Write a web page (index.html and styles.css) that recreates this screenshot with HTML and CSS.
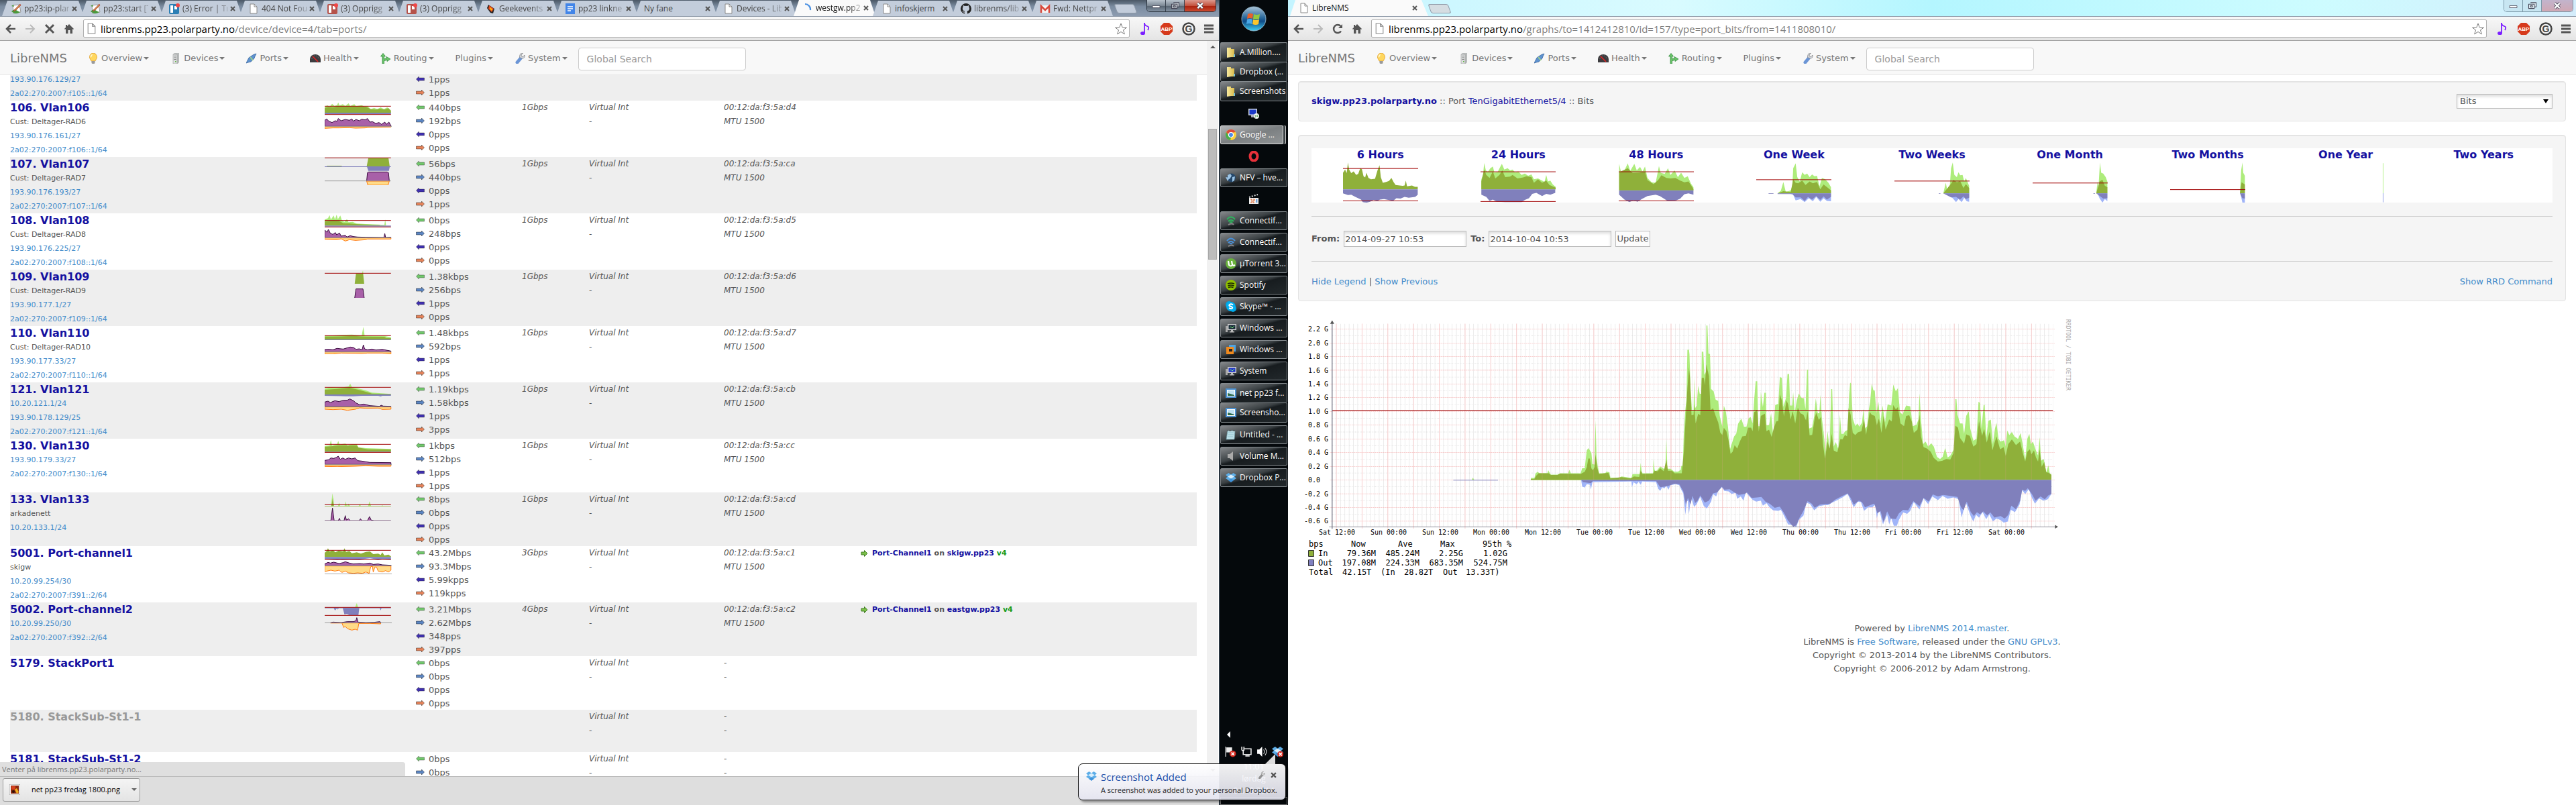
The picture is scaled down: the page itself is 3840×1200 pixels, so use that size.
FILE: index.html
```html
<!DOCTYPE html>
<html lang="no">
<head>
<meta charset="utf-8">
<title>LibreNMS</title>
<link rel="stylesheet" href="styles.css">
</head>
<body>
<svg class="defs" width="0" height="0" aria-hidden="true">
<defs>
<linearGradient id="orb" x1="0" y1="0" x2="0" y2="1"><stop offset="0" stop-color="#a9c4d8"/><stop offset=".45" stop-color="#2c6a9c"/><stop offset=".6" stop-color="#0f4a86"/><stop offset="1" stop-color="#3fd0f5"/></linearGradient>
<linearGradient id="fold" x1="0" y1="0" x2="1" y2="0"><stop offset="0" stop-color="#f7eaa0"/><stop offset="1" stop-color="#d9b94a"/></linearGradient>
</defs>
<symbol id="page" viewBox="0 0 16 16"><path d="M3 1h6l4 4v10H3z" fill="#fff" stroke="#888"/><path d="M9 1v4h4" fill="none" stroke="#888"/></symbol>
<symbol id="x" viewBox="0 0 8 8"><path d="M1 1l6 6M7 1L1 7" stroke="#555" stroke-width="2"/></symbol>
<symbol id="wiki" viewBox="0 0 16 16"><path d="M3 3l10-1 2 11-11 2z" fill="#fff" stroke="#999"/><path d="M1 4l3-2 1 3zM1 12q4-4 7-2t6 3q-6 4-10 1z" fill="#4a9a3c"/><path d="M14 1L6 9l-2 3 4-2 7-7z" fill="#d08a4a" stroke="#a33" stroke-width=".6"/></symbol>
<symbol id="trello" viewBox="0 0 16 16"><rect y="1" width="15" height="15" rx="2" fill="currentColor"/><rect x="2" y="3" width="4" height="11" fill="#fff"/><path d="M8 4h4v5H8z" fill="#fff"/><circle cx="13" cy="3" r="3" fill="#f04848"/></symbol>
<symbol id="geek" viewBox="0 0 16 16"><path d="M4 2l9 6-2 7-4-1-5-7z" fill="#222"/><path d="M5 3l7 5-3 5-5-5z" fill="#e8491d"/><path d="M7 6l3 3-1 2-3-3z" fill="#ffc107"/></symbol>
<symbol id="docs" viewBox="0 0 16 16"><path d="M1 0h14v16H1z" fill="#4285e8"/><path d="M4 5h8M4 8h8M4 11h5" stroke="#fff" stroke-width="1.4"/></symbol>
<symbol id="spin" viewBox="0 0 16 16"><path d="M4 2a8 8 0 0 1 8 9" fill="none" stroke="#4a90e2" stroke-width="2.2"/></symbol>
<symbol id="github" viewBox="0 0 16 16"><path d="M8 0a8 8 0 0 0-2.5 15.600c.4 0 .5-.2.5-.5v-1.500c-2.200.5-2.700-1-2.700-1-.4-.9-.9-1.200-.9-1.200-.7-.5.1-.5.1-.5.8.1 1.200.8 1.200.8.7 1.200 1.900.9 2.300.7.1-.5.3-.9.5-1.100C4.700 11.100 2.900 10.500 2.900 7.400c0-.9.3-1.600.8-2.100 0-.2-.3-1 .1-2.200 0 0 .7-.2 2.200.8a8 8 0 0 1 4 0c1.500-1 2.200-.8 2.200-.8.4 1.200.1 2 .1 2.200.5.5.8 1.200.8 2.100 0 3.100-1.900 3.700-3.700 3.900.3.300.6.800.6 1.500v2.300c0 .3.100.5.500.5A8 8 0 0 0 8 0z" fill="#222"/></symbol>
<symbol id="gmail" viewBox="0 0 16 16"><path d="M1 3h14v11H1z" fill="#f4f4f4"/><path d="M2 14V4l6 6 6-6v10" fill="none" stroke="#d9483b" stroke-width="2.500"/></symbol>
<symbol id="back" viewBox="0 0 16 16"><path d="M15 8H3M8 2L2 8l6 6" fill="none" stroke="currentColor" stroke-width="2.500"/></symbol>
<symbol id="fwd" viewBox="0 0 16 16"><path d="M1 8h12M8 2l6 6-6 6" fill="none" stroke="currentColor" stroke-width="2"/></symbol>
<symbol id="stop" viewBox="0 0 16 16"><path d="M2 2l12 12M14 2L2 14" stroke="#555" stroke-width="3"/></symbol>
<symbol id="reload" viewBox="0 0 16 16"><path d="M13 11.500A6 6 0 1 1 12.500 4" fill="none" stroke="#555" stroke-width="2.500"/><path d="M15 1v6H9z" fill="#555"/></symbol>
<symbol id="home" viewBox="0 0 16 16"><path d="M8 1l7 7-1 1-1-1v7H9.500v-5h-3v5H3V8L2 9 1 8l2-2V2h2v2z" fill="#555"/></symbol>
<symbol id="star" viewBox="0 0 18 18"><path d="M9 1l2.200 5.800 6.200.2-4.900 3.800 1.800 6L9 13.400l-5.300 3.400 1.800-6L.6 7l6.200-.2z" fill="#fff" stroke="#777"/></symbol>
<symbol id="note" viewBox="0 0 16 20"><path d="M8 1v15" stroke="#7b1fff" stroke-width="1.800"/><path d="M8 1q0 4 4 5t1 6" fill="none" stroke="#7b1fff" stroke-width="1.800"/><ellipse cx="5.500" cy="16.500" rx="3.500" ry="2.600" fill="#7b1fff"/></symbol>
<symbol id="abp" viewBox="0 0 20 20"><path d="M6 1h8l5 5v8l-5 5H6l-5-5V6z" fill="#d63a1c"/><text x="10" y="13" text-anchor="middle" font-family="Liberation Sans" font-weight="700" font-size="8" fill="#fff">ABP</text></symbol>
<symbol id="gh" viewBox="0 0 20 20"><circle cx="10" cy="10" r="8.500" fill="#f4f4f4" stroke="#444" stroke-width="2.500"/><text x="10" y="15" text-anchor="middle" font-family="Liberation Sans" font-weight="700" font-size="14" fill="#444">G</text></symbol>
<symbol id="menu" viewBox="0 0 14 14"><path d="M0 2h14M0 7h14M0 12h14" stroke="#555" stroke-width="3"/></symbol>
<symbol id="bulb" viewBox="0 0 16 16"><path d="M8 0a6 6 0 0 1 4 10l-1 2H5l-1-2A6 6 0 0 1 8 0z" fill="#ffd75e" stroke="#e0a030" stroke-width=".8"/><path d="M6 2q-3 2-2 5 2-1 3-5z" fill="#fff7d0"/><path d="M5.500 12h5v3l-1 1h-3l-1-1z" fill="#9a9a9a"/></symbol>
<symbol id="server" viewBox="0 0 16 16"><path d="M4 2l2-2h7v14l-2 2H4z" fill="#b9bcbc"/><path d="M4 2h6v14H4z" fill="#dcdede" stroke="#999" stroke-width=".6"/><path d="M5.500 4.500h3M5.500 7h3M5.500 9.500h3" stroke="#777"/><path d="M7 12h1.500v1.500H7z" fill="#5bb53a"/></symbol>
<symbol id="plug" viewBox="0 0 16 16"><path d="M15 1l-3 1-2 1-6 4-2 4-2 4 3-1 4-1 5-5 1-3z" fill="#5f93d0" stroke="#35639e" stroke-width=".8"/><path d="M6 6l4 5" stroke="#9fd08a" stroke-width="2"/></symbol>
<symbol id="gauge" viewBox="0 0 16 16"><path d="M0 14V9a8 7 0 0 1 16 0v5z" fill="#3c3c3f"/><path d="M3 9a5 5 0 0 1 10 0" stroke="#888" fill="none" stroke-dasharray="1 2"/><path d="M4 5l8 8" stroke="#e22" stroke-width="1.400"/></symbol>
<symbol id="route" viewBox="0 0 16 16"><path d="M3 16V5H.5L4 .5 7.500 5H5.500v4L9 8V5.500L15 9l-5 3.500V10L5.500 12v4z" fill="#6cc46a" stroke="#2f8a3a" stroke-width=".8"/></symbol>
<symbol id="wrench" viewBox="0 0 16 16"><path d="M9 8L4 14" stroke="#6b95d6" stroke-width="5" stroke-linecap="round"/><path d="M15 3l-2.500 2.500-2-.5-.5-2L12.500.5Q9-.5 8 3t0 4l3 1q5 0 4-5z" fill="#d4d8de" stroke="#777" stroke-width=".7"/></symbol>
<symbol id="left" viewBox="0 0 14 10"><path d="M1 5l4-4v2h8v4H5v2z" fill="currentColor" stroke="#0005"/></symbol>
<symbol id="right" viewBox="0 0 14 10"><path d="M13 5L9 1v2H1v4h8v2z" fill="currentColor" stroke="#0006"/></symbol>
<symbol id="go" viewBox="0 0 10 10"><path d="M9.500 5L5 .5V3H.5v4H5v2.500z" fill="#7cbf4a" stroke="#3f7d22"/></symbol>
<symbol id="folder" viewBox="0 0 16 16"><path d="M2 1h6v14l-6 1zM8 3h5v12H8z" fill="url(#fold)"/><path d="M12 11h2v4h-2z" fill="#6cc0dc"/></symbol>
<symbol id="dropbox" viewBox="0 0 16 16"><path d="M4.500 1L8 3.500 11.500 1 16 4l-3 2.500L16 9l-4.500 3L8 9.500 4.500 12 0 9l3-2.500L0 4z" fill="#5eaee8"/><path d="M8 3.500L13 6.500 8 9.500 3 6.500z" fill="#d8eefc"/><path d="M4 12l4-2.500 4 2.500-4 3z" fill="#3e92da"/></symbol>
<symbol id="monitor" viewBox="0 0 16 16"><path d="M0 5h3v9H0z" fill="#aaa"/><path d="M3 2h13v9H3z" fill="#ccc"/><path d="M4.500 3.500h10v6h-10z" fill="currentColor"/><path d="M8 11h3v2h2v1.500H6V13h2z" fill="#bbb"/><path d="M6 7l2-1 2 2 3-3" stroke="#8f8" fill="none"/></symbol>
<symbol id="rdp" viewBox="0 0 16 16"><path d="M0 1h13v10H0z" fill="#ccd4dd"/><path d="M1.500 2.500h10v7h-10z" fill="#1a38c8"/><path d="M4 11h5v3H4z" fill="#aab"/><circle cx="12" cy="12" r="4" fill="#f4f4f4"/><path d="M9.500 11l2 1.500-2 1.500M14.500 10l-2 1.500 2 1.500" stroke="#2a8a2a" fill="none"/></symbol>
<symbol id="chrome" viewBox="0 0 16 16"><circle cx="8" cy="8" r="8" fill="#fbd03a"/><path d="M1 4a8 8 0 0 1 14 0l-7 1-3 4z" fill="#dd4b39"/><path d="M1 4l4 6 3 2-1 4A8 8 0 0 1 1 4z" fill="#4aae48"/><circle cx="8" cy="8" r="3.500" fill="#4a8ae8" stroke="#fff" stroke-width="1.200"/></symbol>
<symbol id="opera" viewBox="0 0 16 16"><ellipse cx="8" cy="8" rx="5.500" ry="6.500" fill="none" stroke="#e8313a" stroke-width="4"/></symbol>
<symbol id="globe" viewBox="0 0 16 16"><circle cx="8.500" cy="8" r="6.500" fill="#24476b"/><path d="M3 4l4-2 2 3-3 5-3-2zM10 7l4-1-1 6-3 2zM0 7l6 1-3 5z" fill="#9cc4e4"/></symbol>
<symbol id="mpc" viewBox="0 0 16 16"><path d="M1 6h14v9H1z" fill="#eee"/><path d="M1 5l13-4" stroke="#ddd" stroke-width="2" stroke-dasharray="2 2"/><path d="M3 8h2v5H3M7 8h2v2H7v3h2" stroke="#e0622a" fill="none"/><path d="M12.500 8v5" stroke="#2a7ad0" stroke-width="1.500"/></symbol>
<symbol id="wifi" viewBox="0 0 16 16"><path d="M2 6q6-7 12 0M4 9q4-4 8 0M6 11q2-2 4 0" fill="none" stroke="currentColor" stroke-width="2"/><path d="M4 14q6-3 8 0" stroke="#888" fill="none" stroke-width="2"/></symbol>
<symbol id="ut" viewBox="0 0 16 16"><circle cx="8" cy="8" r="8" fill="#69b13c"/><path d="M4 4l1 6q3 3 5 0l-1-6M10 9q1 3 4 1" fill="none" stroke="#fff" stroke-width="2.200"/></symbol>
<symbol id="spotify" viewBox="0 0 16 16"><circle cx="8" cy="8" r="8" fill="#8fbf00"/><path d="M3 6q5-2 10 0M3.500 9q4.500-2 9 0M4 11.500q4-1.500 7.500 0" fill="none" stroke="#1a2400" stroke-width="1.500"/></symbol>
<symbol id="skype" viewBox="0 0 16 16"><circle cx="5" cy="5" r="5" fill="#00a6e4"/><circle cx="11" cy="11" r="5" fill="#00a6e4"/><circle cx="8" cy="8" r="7" fill="#00aff0"/><path d="M11 5.500Q8 3.500 6 5t1.500 2.800T10 10.500t-5-.2" fill="none" stroke="#fff" stroke-width="2"/></symbol>
<symbol id="vm" viewBox="0 0 16 16"><path d="M5 1h10v10H5z" fill="#4fa3e0"/><path d="M1 4h11v11H1z" fill="#f08a1d"/><path d="M5 7h5v4H5z" fill="#222"/></symbol>
<symbol id="pic" viewBox="0 0 16 16"><path d="M0 1h16v14H0z" fill="#4a90d0"/><path d="M2 3h12v10H2z" fill="#fff"/><path d="M3 4h10v8H3z" fill="#bfe0f2"/><path d="M3 12V8l4 1 6 2v1z" fill="#2f6a4a"/></symbol>
<symbol id="pad" viewBox="0 0 16 16"><path d="M3 2h11l-1 13H1z" fill="#bfe2ea" stroke="#6b9aa5" stroke-width=".7"/><path d="M4 5h8M4 8h8M3 11h8" stroke="#8fc0cc"/><path d="M3 2h11" stroke="#444" stroke-width="1.500" stroke-dasharray="1 1"/></symbol>
<symbol id="vol" viewBox="0 0 16 16"><path d="M3 5h3l5-4v14l-5-4H3z" fill="currentColor"/></symbol>
<symbol id="orbi" viewBox="0 0 38 38"><circle cx="19" cy="19" r="18" fill="url(#orb)" stroke="#8fb0c4"/><path d="M10 12q4-2 8 0l-1 7q-4-2-8 0z" fill="#e8602a"/><path d="M19 12q4 2 9 0l-1 7q-4 2-9 0z" fill="#94c83d"/><path d="M9 20q4-2 8 0l-1 7q-4-2-8 0z" fill="#4aa8e8"/><path d="M18 20q4 2 9 0l-1 7q-4 2-9 0z" fill="#fcc62c"/></symbol>
<symbol id="wmin" viewBox="0 0 14 10"><path d="M1 5l11 0v3H1z" fill="#fff" stroke="#445" stroke-width=".8"/></symbol>
<symbol id="wres" viewBox="0 0 14 12"><path d="M4 1h9v7h-2M1 3.500h9v7H1zM4 6h3v2H4z" fill="#fff8" stroke="#445" stroke-width="1.200"/></symbol>
<symbol id="wx" viewBox="0 0 14 12"><path d="M3 2l8 8M11 2l-8 8" stroke="#445" stroke-width="4.500"/><path d="M3 2l8 8M11 2l-8 8" stroke="#fff" stroke-width="2.600"/></symbol>
</svg>

<div class="desktop">
<section class="browser">
  <header class="tabs tabs-dark">
    <a class="tab" href="#"><svg><use href="#wiki"/></svg><span>pp23:ip-plan</span><svg class="x"><use href="#x"/></svg></a>
    <a class="tab" href="#"><svg><use href="#wiki"/></svg><span>pp23:start [T</span><svg class="x"><use href="#x"/></svg></a>
    <a class="tab" href="#"><svg class="tb"><use href="#trello"/></svg><span>(3) Error | Tr</span><svg class="x"><use href="#x"/></svg></a>
    <a class="tab" href="#"><svg><use href="#page"/></svg><span>404 Not Fou</span><svg class="x"><use href="#x"/></svg></a>
    <a class="tab" href="#"><svg class="tr"><use href="#trello"/></svg><span>(3) Opprigg</span><svg class="x"><use href="#x"/></svg></a>
    <a class="tab" href="#"><svg class="tr"><use href="#trello"/></svg><span>(3) Opprigg</span><svg class="x"><use href="#x"/></svg></a>
    <a class="tab" href="#"><svg><use href="#geek"/></svg><span>Geekevents</span><svg class="x"><use href="#x"/></svg></a>
    <a class="tab" href="#"><svg><use href="#docs"/></svg><span>pp23 linkne</span><svg class="x"><use href="#x"/></svg></a>
    <a class="tab plain" href="#"><span>Ny fane</span><svg class="x"><use href="#x"/></svg></a>
    <a class="tab" href="#"><svg><use href="#page"/></svg><span>Devices - Lib</span><svg class="x"><use href="#x"/></svg></a>
    <a class="tab active" href="#"><svg><use href="#spin"/></svg><span>westgw.pp2</span><svg class="x"><use href="#x"/></svg></a>
    <a class="tab plain" href="#"><svg><use href="#page"/></svg><span>infoskjerm</span><svg class="x"><use href="#x"/></svg></a>
    <a class="tab" href="#"><svg><use href="#github"/></svg><span>librenms/lib</span><svg class="x"><use href="#x"/></svg></a>
    <a class="tab" href="#"><svg><use href="#gmail"/></svg><span>Fwd: Nettpr</span><svg class="x"><use href="#x"/></svg></a>
    <button class="newtab" aria-label="New tab"></button>
    <div class="winctl dark"><button aria-label="Minimise"><svg><use href="#wmin"/></svg></button><button aria-label="Restore"><svg><use href="#wres"/></svg></button><button class="close" aria-label="Close"><svg><use href="#wx"/></svg></button></div>
  </header>
  <div class="toolbar">
    <svg class="ti"><use href="#back"/></svg><svg class="ti dim"><use href="#fwd"/></svg><svg class="ti"><use href="#stop"/></svg><svg class="ti"><use href="#home"/></svg>
    <div class="url"><svg><use href="#page"/></svg><span class="addr"><b>librenms.pp23.polarparty.no</b>/device/device=4/tab=ports/</span><svg class="star"><use href="#star"/></svg></div>
    <svg class="ext"><use href="#note"/></svg><svg class="ext"><use href="#abp"/></svg><svg class="ext"><use href="#gh"/></svg><svg class="mn"><use href="#menu"/></svg>
  </div>
  <div class="view">
    <main class="doc">
      <nav class="navbar">
        <a class="brand" href="#">LibreNMS</a>
        <a href="#"><svg><use href="#bulb"/></svg>Overview<i></i></a><a href="#"><svg><use href="#server"/></svg>Devices<i></i></a><a href="#"><svg><use href="#plug"/></svg>Ports<i></i></a><a href="#"><svg><use href="#gauge"/></svg>Health<i></i></a><a href="#"><svg><use href="#route"/></svg>Routing<i></i></a><a href="#">Plugins<i></i></a><a href="#"><svg><use href="#wrench"/></svg>System<i></i></a>
        <input type="search" placeholder="Global Search" aria-label="Global Search">
      </nav>
      <div class="scrolled">
      <table class="ports">
        <colgroup><col class="c-name"><col class="c-graph"><col class="c-rate"><col class="c-speed"><col class="c-type"><col class="c-mac"><col></colgroup>
        <tbody>
        <tr><td><a href="#">193.90.176.129/27</a><a href="#">2a02:270:2007:f105::1/64</a></td><td></td><td><p class="pi"><svg><use href="#left"/></svg>1pps</p><p class="po"><svg><use href="#right"/></svg>1pps</p></td><td></td><td></td><td></td><td></td></tr>

        <tr><td><a class="name" href="#">106. Vlan106</a><span>Cust: Deltager-RAD6</span><a href="#">193.90.176.161/27</a><a href="#">2a02:270:2007:f106::1/64</a></td>
        <td><svg class="spark" viewBox="0 0 163 126" preserveAspectRatio="none"><path class="gl" d="M0 54V30L6 20 12 28 18 14 24 24 30 20 33 8 36 22 44 16 50 24 58 12 62 24 72 16 76 25 90 20 98 28 104 24 112 38 120 32 128 38 136 30 144 38 152 30 156 36 161 54z"/><path class="g" d="M0 54V32L10 28 20 30 30 26 100 27 112 38 125 40 135 36 145 40 155 34 161 44V54z"/><path class="b" d="M0 54H161V61H0z"/><path class="r" d="M0 25H161M0 62H161"/><path class="p" d="M0 115V88L5 82 10 92 18 98 25 90 30 92 33 80 40 90 50 84 60 88 66 82 70 92 76 84 84 90 90 83 98 86 104 80 110 96 116 94 124 102 132 98 138 106 146 96 150 106 156 96 161 112V115z"/><path class="o" d="M0 116V124L20 122 35 122 60 121 75 123 98 122 105 120 161 118V116z"/><path class="a" d="M0 115H163"/></svg></td>
        <td><p class="bi"><svg><use href="#left"/></svg>440bps</p><p class="bo"><svg><use href="#right"/></svg>192bps</p><p class="pi"><svg><use href="#left"/></svg>0pps</p><p class="po"><svg><use href="#right"/></svg>0pps</p></td><td>1Gbps</td><td>Virtual Int<br>-</td><td>00:12:da:f3:5a:d4<br>MTU 1500</td><td></td></tr>

        <tr><td><a class="name" href="#">107. Vlan107</a><span>Cust: Deltager-RAD7</span><a href="#">193.90.176.193/27</a><a href="#">2a02:270:2007:f107::1/64</a></td>
        <td><svg class="spark" viewBox="0 0 163 126" preserveAspectRatio="none"><path class="g" d="M102 43L106 5H155L158 43zM4 43L6 40H40L44 43z"/><path class="b" d="M0 42H102 161V45H158L156 62H106L103 45H0z"/><path class="r" d="M0 4H161"/><path class="p" d="M102 107L104 70 107 67H152L155 70 157 107z"/><path class="o" d="M102 108L105 126H154L157 108z"/><path class="a" d="M0 107H161"/></svg></td>
        <td><p class="bi"><svg><use href="#left"/></svg>56bps</p><p class="bo"><svg><use href="#right"/></svg>440bps</p><p class="pi"><svg><use href="#left"/></svg>0pps</p><p class="po"><svg><use href="#right"/></svg>1pps</p></td><td>1Gbps</td><td>Virtual Int<br>-</td><td>00:12:da:f3:5a:ca<br>MTU 1500</td><td></td></tr>

        <tr><td><a class="name" href="#">108. Vlan108</a><span>Cust: Deltager-RAD8</span><a href="#">193.90.176.225/27</a><a href="#">2a02:270:2007:f108::1/64</a></td>
        <td><svg class="spark" viewBox="0 0 163 126" preserveAspectRatio="none"><path class="gl" d="M0 55V28L8 22 12 8 15 28 22 10 25 28 29 6 32 26 38 10 42 32 48 38 54 26 58 40 68 38 78 46 100 48 130 50 145 52 147 28 149 52V55z"/><path class="g" d="M0 55V36L10 34 22 32 35 34 45 44 60 45 75 48 100 50 134 52V55z"/><path class="b" d="M0 55H161V59H0z"/><path class="r" d="M0 32H161M0 61H161"/><path class="p" d="M0 109V75L6 84 9 72 14 90 20 94 26 86 29 96 36 88 40 102 50 98 54 106 62 100 70 104 80 106 100 107 144 108 146 90 148 108 161 107V109z"/><path class="o" d="M0 110V116L30 118 40 114 50 124 60 118 75 121 100 118 104 115 161 115V110z"/><path class="a" d="M0 109H161"/></svg></td>
        <td><p class="bi"><svg><use href="#left"/></svg>0bps</p><p class="bo"><svg><use href="#right"/></svg>248bps</p><p class="pi"><svg><use href="#left"/></svg>0pps</p><p class="po"><svg><use href="#right"/></svg>0pps</p></td><td>1Gbps</td><td>Virtual Int<br>-</td><td>00:12:da:f3:5a:d5<br>MTU 1500</td><td></td></tr>

        <tr><td><a class="name" href="#">109. Vlan109</a><span>Cust: Deltager-RAD9</span><a href="#">193.90.177.1/27</a><a href="#">2a02:270:2007:f109::1/64</a></td>
        <td><svg class="spark" viewBox="0 0 163 126" preserveAspectRatio="none"><path class="gl" d="M90 20L93 4 96 62z"/><path class="g" d="M73 63L76 18H93L96 63z"/><path class="r" d="M0 16H161"/><path class="p" d="M73 126L76 86H93L96 126"/></svg></td>
        <td><p class="bi"><svg><use href="#left"/></svg>1.38kbps</p><p class="bo"><svg><use href="#right"/></svg>256bps</p><p class="pi"><svg><use href="#left"/></svg>1pps</p><p class="po"><svg><use href="#right"/></svg>0pps</p></td><td>1Gbps</td><td>Virtual Int<br>-</td><td>00:12:da:f3:5a:d6<br>MTU 1500</td><td></td></tr>

        <tr><td><a class="name" href="#">110. Vlan110</a><span>Cust: Deltager-RAD10</span><a href="#">193.90.177.33/27</a><a href="#">2a02:270:2007:f110::1/64</a></td>
        <td><svg class="spark" viewBox="0 0 163 126" preserveAspectRatio="none"><path class="gl" d="M0 60V44L20 42 40 40 66 38 90 42 94 4 97 42 120 44 145 44 161 50V60z"/><path class="g" d="M0 60V47L50 46 70 44 100 47 145 48 150 54 161 54V60z"/><path class="b" d="M0 60H161V63H0z"/><path class="r" d="M0 43H161"/><path class="p" d="M0 115V105L10 104 20 106 30 100 45 103 54 98 62 94 70 96 76 104 84 102 91 106 94 84 97 102 104 106 115 103 125 107 140 104 150 108 161 112V115z"/><path class="o" d="M0 116V125L20 125 40 121 75 122 90 123 104 121 140 121 161 125V116z"/><path class="a" d="M0 116H161"/></svg></td>
        <td><p class="bi"><svg><use href="#left"/></svg>1.48kbps</p><p class="bo"><svg><use href="#right"/></svg>592bps</p><p class="pi"><svg><use href="#left"/></svg>1pps</p><p class="po"><svg><use href="#right"/></svg>1pps</p></td><td>1Gbps</td><td>Virtual Int<br>-</td><td>00:12:da:f3:5a:d7<br>MTU 1500</td><td></td></tr>

        <tr><td><a class="name" href="#">121. Vlan121</a><a href="#">10.20.121.1/24</a><a href="#">193.90.178.129/25</a><a href="#">2a02:270:2007:f121::1/64</a></td>
        <td><svg class="spark" viewBox="0 0 163 126" preserveAspectRatio="none"><path class="gl" d="M0 54V28L15 22 30 24 45 22 58 18 62 6 66 20 80 26 100 36 115 46 161 52V54z"/><path class="g" d="M0 54V33L30 29 60 24 80 32 100 42 115 50 161 52V54z"/><path class="b" d="M0 54H161V60H140L136 63 130 60 90 60 70 62 50 62 0 60z"/><path class="r" d="M0 22H161"/><path class="p" d="M0 108V88L8 84 14 90 25 82 35 86 45 80 55 80 61 74 70 82 76 92 85 100 95 97 110 104 125 106 134 107 137 102 142 106 161 107V108z"/><path class="o" d="M0 110V120L20 122 40 120 55 125 75 120 85 114 100 116 130 115 140 121 161 120V110z"/><path class="a" d="M0 109H161"/></svg></td>
        <td><p class="bi"><svg><use href="#left"/></svg>1.19kbps</p><p class="bo"><svg><use href="#right"/></svg>1.58kbps</p><p class="pi"><svg><use href="#left"/></svg>1pps</p><p class="po"><svg><use href="#right"/></svg>3pps</p></td><td>1Gbps</td><td>Virtual Int<br>-</td><td>00:12:da:f3:5a:cb<br>MTU 1500</td><td></td></tr>

        <tr><td><a class="name" href="#">130. Vlan130</a><a href="#">193.90.179.33/27</a><a href="#">2a02:270:2007:f130::1/64</a></td>
        <td><svg class="spark" viewBox="0 0 163 126" preserveAspectRatio="none"><path class="gl" d="M0 58V32L12 30 15 6 18 30 30 24 33 10 36 26 50 22 56 30 66 24 78 24 82 38 100 42 161 46V58z"/><path class="g" d="M0 58V36L20 33 35 30 78 30 82 40 105 47 161 48V58z"/><path class="b" d="M0 58H161V60H0z"/><path class="r" d="M0 25H161M0 61H161"/><path class="p" d="M0 115V97L10 94 15 86 22 88 28 84 33 78 38 92 44 86 50 92 58 86 66 90 74 86 80 98 90 100 110 106 161 107V115z"/><path class="o" d="M0 117V124L30 125 75 123 100 121 130 123 161 123V117z"/><path class="a" d="M0 116H163"/></svg></td>
        <td><p class="bi"><svg><use href="#left"/></svg>1kbps</p><p class="bo"><svg><use href="#right"/></svg>512bps</p><p class="pi"><svg><use href="#left"/></svg>1pps</p><p class="po"><svg><use href="#right"/></svg>1pps</p></td><td>1Gbps</td><td>Virtual Int<br>-</td><td>00:12:da:f3:5a:cc<br>MTU 1500</td><td></td></tr>

        <tr><td><a class="name" href="#">133. Vlan133</a><span>arkadenett</span><a href="#">10.20.133.1/24</a></td>
        <td><svg class="spark" viewBox="0 0 163 126" preserveAspectRatio="none"><path class="gl" d="M15 62L19 4 23 62H32L35 46 38 62H48L51 40 54 62 58 50 62 62H82L86 50 88 62H105L109 40 113 62H138L140 56 142 62z"/><path class="g" d="M16 62L20 24 22 62zM0 61H161V63H0z"/><path class="r" d="M0 55H161"/><path class="p" d="M0 126H15L19 70 23 126H33L36 116 38 126H47L50 104 53 124 58 118 62 126H84L87 118 90 126H104L109 108 113 124 120 126H161"/></svg></td>
        <td><p class="bi"><svg><use href="#left"/></svg>8bps</p><p class="bo"><svg><use href="#right"/></svg>0bps</p><p class="pi"><svg><use href="#left"/></svg>0pps</p><p class="po"><svg><use href="#right"/></svg>0pps</p></td><td>1Gbps</td><td>Virtual Int<br>-</td><td>00:12:da:f3:5a:cd<br>MTU 1500</td><td></td></tr>

        <tr><td><a class="name" href="#">5001. Port-channel1</a><span>skigw</span><a href="#">10.20.99.254/30</a><a href="#">2a02:270:2007:f391::2/64</a></td>
        <td><svg class="spark" viewBox="0 0 163 126" preserveAspectRatio="none"><path class="g" d="M0 49V30L5 22 8 10 12 24 20 18 26 28 34 20 45 24 48 10 52 26 60 22 66 32 78 28 88 34 100 26 110 24 118 36 130 34 136 40 140 28 145 42 155 38 161 46V49z"/><path class="b" d="M0 49H161V59L140 57 130 60 110 55 98 57 85 60 60 59 30 60 0 57z"/><path class="r" d="M0 19H161M0 61H161"/><path class="p" d="M0 88V80L8 73 14 76 22 72 35 78 45 74 50 70 60 76 70 80 85 78 95 80 110 76 118 82 130 80 140 84 161 86V88z"/><path class="o" d="M0 89V114L15 108 25 112 35 108 42 118 50 112 58 120 70 122 80 120 92 122 100 116 108 122 112 92 116 90 118 116 122 94 126 94 130 112 140 116 148 110 155 116 161 108V89z"/><path class="a" d="M0 88H163M0 125H163"/></svg></td>
        <td><p class="bi"><svg><use href="#left"/></svg>43.2Mbps</p><p class="bo"><svg><use href="#right"/></svg>93.3Mbps</p><p class="pi"><svg><use href="#left"/></svg>5.99kpps</p><p class="po"><svg><use href="#right"/></svg>119kpps</p></td><td>3Gbps</td><td>Virtual Int<br>-</td><td>00:12:da:f3:5a:c1<br>MTU 1500</td><td class="nb"><svg><use href="#go"/></svg><a href="#">Port-Channel1</a> on <a href="#">skigw.pp23</a> <em>v4</em></td></tr>

        <tr><td><a class="name" href="#">5002. Port-channel2</a><a href="#">10.20.99.250/30</a><a href="#">2a02:270:2007:f392::2/64</a></td>
        <td><svg class="spark" viewBox="0 0 163 126" preserveAspectRatio="none"><path class="gl" d="M74 22L78 3 81 22z"/><path class="b" d="M0 23H161V26H138L136 36 134 26H84L82 57H60L54 52 48 54 44 26H34L32 32 30 26 25 36 22 26H0z"/><path class="r" d="M0 22H161M0 58H161"/><path class="p" d="M14 91L20 88 40 90 55 86 70 86 76 82 78 68 81 88 100 90 120 89 134 86 137 91z"/><path class="o" d="M14 92H42L46 112 50 108 56 118 66 124 74 120 80 124 83 94 110 94 136 96V92z"/><path class="a" d="M0 91H163"/></svg></td>
        <td><p class="bi"><svg><use href="#left"/></svg>3.21Mbps</p><p class="bo"><svg><use href="#right"/></svg>2.62Mbps</p><p class="pi"><svg><use href="#left"/></svg>348pps</p><p class="po"><svg><use href="#right"/></svg>397pps</p></td><td>4Gbps</td><td>Virtual Int<br>-</td><td>00:12:da:f3:5a:c2<br>MTU 1500</td><td class="nb"><svg><use href="#go"/></svg><a href="#">Port-Channel1</a> on <a href="#">eastgw.pp23</a> <em>v4</em></td></tr>

        <tr><td><a class="name" href="#">5179. StackPort1</a></td><td></td>
        <td><p class="bi"><svg><use href="#left"/></svg>0bps</p><p class="bo"><svg><use href="#right"/></svg>0bps</p><p class="pi"><svg><use href="#left"/></svg>0pps</p><p class="po"><svg><use href="#right"/></svg>0pps</p></td><td></td><td>Virtual Int<br>-</td><td>-<br>-</td><td></td></tr>

        <tr class="down"><td><a class="name" href="#">5180. StackSub-St1-1</a></td><td></td><td></td><td></td><td>Virtual Int<br>-</td><td>-<br>-</td><td></td></tr>

        <tr><td><a class="name" href="#">5181. StackSub-St1-2</a></td><td></td>
        <td><p class="bi"><svg><use href="#left"/></svg>0bps</p><p class="bo"><svg><use href="#right"/></svg>0bps</p></td><td></td><td>Virtual Int<br>-</td><td>-<br>-</td><td></td></tr>
        </tbody>
      </table>
      </div>
      <div class="status">Venter på librenms.pp23.polarparty.no...</div>
    </main>
    <div class="scrollbar"><span class="up"></span><span class="thumb"></span><span class="dn"></span></div>
  </div>
  <footer class="shelf">
    <button class="dl"><svg viewBox="0 0 16 16"><path d="M0 0h16v16H0z" fill="#fff" stroke="#999"/><path d="M2 2h12v12H2z" fill="#8c2a10"/><path d="M3 3h6v5H3z" fill="#d8431f"/><path d="M8 8l3-2 3 6-3 2z" fill="#f0b020"/><circle cx="6" cy="11" r="2" fill="#301008"/></svg><span>net pp23 fredag 1800.png</span><i></i></button>
    <a class="all" href="#">Vis alle nedlastinger</a>
  </footer>
</section>

<aside class="taskbar">
  <svg class="start"><use href="#orbi"/></svg>
  <div class="grp"><button><svg><use href="#folder"/></svg>A.Million....</button><button><svg><use href="#folder"/></svg>Dropbox (...</button><button><svg><use href="#folder"/></svg>Screenshots</button></div>
  <span class="pin"><svg><use href="#rdp"/></svg></span>
  <button class="on"><svg><use href="#chrome"/></svg>Google ...</button>
  <span class="pin"><svg><use href="#opera"/></svg></span>
  <button><svg><use href="#globe"/></svg>NFV – hve...</button>
  <span class="pin"><svg><use href="#mpc"/></svg></span>
  <button><svg class="green"><use href="#wifi"/></svg>Connectif...</button>
  <button><svg class="blue"><use href="#wifi"/></svg>Connectif...</button>
  <button><svg><use href="#ut"/></svg>µTorrent 3...</button>
  <button><svg><use href="#spotify"/></svg>Spotify</button>
  <button><svg><use href="#skype"/></svg>Skype™ - ...</button>
  <button><svg class="scr"><use href="#monitor"/></svg>Windows ...</button>
  <button><svg><use href="#vm"/></svg>Windows ...</button>
  <button><svg class="scb"><use href="#monitor"/></svg>System</button>
  <div class="grp"><button><svg><use href="#pic"/></svg>net pp23 f...</button><button><svg><use href="#pic"/></svg>Screensho...</button></div>
  <button><svg><use href="#pad"/></svg>Untitled - ...</button>
  <button><svg class="grey"><use href="#vol"/></svg>Volume M...</button>
  <button><svg><use href="#dropbox"/></svg>Dropbox P...</button>
  <div class="tray">
    <span class="more"></span>
    <div class="tris">
      <svg viewBox="0 0 16 16"><path d="M1 1v14" stroke="#fff"/><path d="M2 2h8v7H2z" fill="#eee"/><circle cx="11" cy="11" r="4.500" fill="#d8281c"/><path d="M9 9l4 4M13 9l-4 4" stroke="#fff" stroke-width="1.500"/></svg>
      <svg viewBox="0 0 16 16"><path d="M5 4h10v8H4V6M7 14h6M2 1v4q0 2 3 1V1" fill="none" stroke="#eee" stroke-width="1.500"/></svg>
      <svg viewBox="0 0 16 16"><path d="M1 5h3l4-4v14l-4-4H1z" fill="#fff"/><path d="M10 5q2 3 0 6M12 3q4 5 0 10" fill="none" stroke="#ddd"/></svg>
      <svg viewBox="0 0 16 16"><use href="#dropbox"/><circle cx="12" cy="11.500" r="4.200" fill="#d8281c"/><path d="M10 9.500l4 4M14 9.500l-4 4" stroke="#fff" stroke-width="1.500"/></svg>
    </div>
    <time>11:01<br>lørdag<br>04.10.2014</time>
    <span class="show"></span>
  </div>
</aside>

<section class="browser light">
  <header class="tabs tabs-light">
    <a class="tab active wide" href="#"><svg><use href="#page"/></svg><span>LibreNMS</span><svg class="x"><use href="#x"/></svg></a>
    <button class="newtab" aria-label="New tab"></button>
    <div class="winctl pale"><button aria-label="Minimise"><svg><use href="#wmin"/></svg></button><button aria-label="Restore"><svg><use href="#wres"/></svg></button><button class="close" aria-label="Close"><svg><use href="#wx"/></svg></button></div>
  </header>
  <div class="toolbar">
    <svg class="ti"><use href="#back"/></svg><svg class="ti dim"><use href="#fwd"/></svg><svg class="ti"><use href="#reload"/></svg><svg class="ti"><use href="#home"/></svg>
    <div class="url"><svg><use href="#page"/></svg><span class="addr"><b>librenms.pp23.polarparty.no</b>/graphs/to=1412412810/id=157/type=port_bits/from=1411808010/</span><svg class="star"><use href="#star"/></svg></div>
    <svg class="ext"><use href="#note"/></svg><svg class="ext"><use href="#abp"/></svg><svg class="ext"><use href="#gh"/></svg><svg class="mn"><use href="#menu"/></svg>
  </div>
  <main class="doc">
    <nav class="navbar">
      <a class="brand" href="#">LibreNMS</a>
      <a href="#"><svg><use href="#bulb"/></svg>Overview<i></i></a><a href="#"><svg><use href="#server"/></svg>Devices<i></i></a><a href="#"><svg><use href="#plug"/></svg>Ports<i></i></a><a href="#"><svg><use href="#gauge"/></svg>Health<i></i></a><a href="#"><svg><use href="#route"/></svg>Routing<i></i></a><a href="#">Plugins<i></i></a><a href="#"><svg><use href="#wrench"/></svg>System<i></i></a>
      <input type="search" placeholder="Global Search" aria-label="Global Search">
    </nav>
    <div class="content">
      <div class="well crumb"><p><a class="navy" href="#"><b>skigw.pp23.polarparty.no</b></a> :: Port <a class="navy" href="#">TenGigabitEthernet5/4</a> :: Bits</p><label class="sel"><select aria-label="Graph type"><option>Bits</option></select></label></div>
      <div class="well panel">
        <div class="ranges">
          <a href="#">6 Hours<svg viewBox="0 0 183 186" preserveAspectRatio="none"><path class="g" d="M0 126V50L5 36 9 52 12 4 15 36 20 52 26 44 32 60 37 56 42 30 46 34 50 66 54 72 57 50 62 74 68 80 78 78 84 40 89 16 92 70 97 96 105 92 112 88 118 74 123 92 128 106 138 108 145 110 150 108 153 86 156 112 168 108 175 114 182 114V126z"/><path class="b" d="M0 126H182V150L176 160 160 164 150 160 140 168 130 166 122 178 110 174 100 170 90 172 84 178 74 174 66 182 58 186 48 184 44 172 30 160 20 150 12 152 0 144z"/><path class="r" d="M0 31H183M0 178H183"/></svg></a>
          <a href="#">24 Hours<svg viewBox="0 0 183 186" preserveAspectRatio="none"><path class="gl" d="M2 126V80L6 60 9 6 13 40 18 46 24 30 30 22 34 50 42 46 48 24 52 10 58 36 66 30 72 40 78 36 84 48 92 44 100 60 108 54 116 64 124 58 130 80 140 76 148 84 156 92 160 60 164 90 170 86 176 104 183 114V126z"/><path class="g" d="M2 126V90L9 36 14 60 22 74 30 44 36 76 46 60 53 40 60 70 72 68 78 60 90 76 104 72 112 66 124 70 130 96 140 80 150 96 160 86 168 106 183 118V126z"/><path class="b" d="M2 126H182V142L170 150 160 146 150 156 136 142 126 146 118 166 108 174 100 184 60 184 40 182 30 172 22 178 14 160 2 150z"/><path class="r" d="M0 46H183M0 181H183"/></svg></a>
          <a href="#">48 Hours<svg viewBox="0 0 183 186" preserveAspectRatio="none"><path class="gl" d="M1 130V10L6 50 14 40 22 8 28 42 38 10 44 40 52 24 58 44 64 22 70 74 80 94 90 96 98 20 102 50 112 56 120 30 126 60 136 40 144 70 152 50 160 74 168 66 176 100 182 116V130z"/><path class="g" d="M1 130V48L22 30 34 52 50 50 64 46 70 84 85 102 96 84 104 62 116 74 126 76 138 74 150 86 160 94 170 90 182 124V130z"/><path class="b" d="M1 130H182V150L170 144 160 148 150 168 140 176 120 180 110 168 100 156 90 150 70 156 56 170 46 182 36 176 26 184 14 172 1 150z"/><path class="r" d="M0 46H183M0 178H183"/></svg></a>
          <a href="#">One Week<svg viewBox="0 0 183 186" preserveAspectRatio="none"><path class="gl" d="M52 144L60 132 66 92 72 138 84 130 88 110 90 30 96 8 100 70 106 90 112 48 118 60 124 54 130 70 136 58 142 66 148 64 154 112 160 74 168 80 176 96 182 116V144z"/><path class="g" d="M52 144L66 134 84 138 90 80 96 96 102 98 112 86 120 106 130 90 138 98 148 92 156 126 164 104 174 118 182 130V144z"/><path class="bl" d="M80 144H182V180L172 178 164 166 156 182 146 160 138 180 128 166 118 184 108 170 96 176 90 150z"/><path class="b" d="M30 144H42V146H30zM52 144H182V160L172 172 164 158 156 174 146 156 136 172 126 160 118 178 108 162 96 162 88 147H52z"/><path class="r" d="M0 82H183"/></svg></a>
          <a href="#">Two Weeks<svg viewBox="0 0 183 186" preserveAspectRatio="none"><path class="gl" d="M119 144L125 96 130 140 134 130 138 30 142 4 146 60 152 70 156 48 160 62 166 60 170 90 174 74 182 110V144z"/><path class="g" d="M119 144L138 100 144 82 152 94 160 88 168 120 174 102 182 120V144z"/><path class="bl" d="M125 144H182V182L176 180 170 164 164 184 156 170 150 184 142 166z"/><path class="b" d="M108 144H112V146H108zM119 144H182V164L174 170 168 158 160 172 150 160 138 162z"/><path class="r" d="M0 88H183"/></svg></a>
          <a href="#">One Month<svg viewBox="0 0 183 186" preserveAspectRatio="none"><path class="gl" d="M155 144L158 90 160 130 164 4 167 50 172 54 178 70 182 90V144z"/><path class="g" d="M155 144L163 90 170 82 176 110 182 116V144z"/><path class="bl" d="M158 144H182V180L176 170 170 186 163 166z"/><path class="b" d="M148 144H152V146H148zM155 144H182V166L172 168z"/><path class="r" d="M0 97H183"/></svg></a>
          <a href="#">Two Months<svg viewBox="0 0 183 186" preserveAspectRatio="none"><path class="gl" d="M170 144L173 40 176 4 178 50 182 64V144z"/><path class="g" d="M170 144L174 94 182 104V144z"/><path class="bl" d="M171 144H182V186H176z"/><path class="b" d="M170 144H182V168L176 166z"/><path class="r" d="M0 127H183"/></svg></a>
          <a href="#">One Year<svg viewBox="0 0 183 186" preserveAspectRatio="none"><path class="gl" d="M182 8V144H183V8z" stroke="#aef080"/><path class="b" d="M182 144V184H183V144z" stroke="#8ca0f0"/></svg></a>
          <a href="#">Two Years<svg viewBox="0 0 183 186"></svg></a>
        </div>
        <hr>
        <form class="dates"><label for="from">From:</label><input id="from" type="text" value="2014-09-27 10:53"><label for="to">To:</label><input id="to" type="text" value="2014-10-04 10:53"><button type="button">Update</button></form>
        <hr>
        <div class="links"><p><a href="#">Hide Legend</a> | <a href="#">Show Previous</a></p><a href="#">Show RRD Command</a></div>
      </div>
      <svg class="rrd" viewBox="0 0 1160 390">
        <g transform="translate(-15 -35) scale(.7653 .38273)">
          <path d="M93.500 507H1490" stroke="#e6e6e6" stroke-width="790" stroke-dasharray="1 7.360"/>
          <path class="gh" d="M86 158H1490M86 212H1490M86 265H1490M86 319H1490M86 372H1490M86 426H1490M86 479H1490M86 533H1490M86 586H1490M86 640H1490M86 693H1490M86 746H1490M86 800H1490M86 853H1490"/>
          <path d="M93.500 510H1490" stroke="#fad0d0" stroke-width="798" stroke-dasharray="1.300 48.850"/>
          <path class="ph" d="M82 132H1494M82 187H1494M82 239H1494M82 292H1494M82 346H1494M82 399H1494M82 453H1494M82 506H1494M82 560H1494M82 613H1494M82 667H1494M82 720H1494M82 774H1494M82 827H1494M82 880H1494"/>
          <path class="gl" d="M358 720L360 711 363 720zM473 720V712L480 712 482 695 486 688 490 694 505 694 507 682 510 694 512 699 525 699 530 694 546 694 548 680 551 694 570 694 573 674 578 674 579 655 582 604 585 596 588 604 591 615 593 658 597 660 599 486 601 630 603 662 606 694 618 694 620 687 626 690 628 711 644 711 650 706 665 711 669 712 671 697 685 697 687 653 689 688 691 694 711 694 712 638 714 680 716 686 720 680 725 667 731 675 735 680 737 562 739 676 745 676 752 687 760 687 765 680 766 665 769 665 771 536 774 445 776 410 778 212 781 212 782 230 784 360 787 450 790 450 791 320 793 440 796 430 799 352 802 384 805 384 806 220 809 220 811 310 814 300 815 118 817 118 819 227 822 230 824 365 829 374 833 407 838 412 841 470 846 512 849 430 853 455 857 512 861 600 865 575 869 550 873 540 877 500 883 481 888 512 893 512 897 480 901 474 905 500 908 408 911 335 914 335 916 510 919 510 921 376 925 436 928 380 931 380 932 507 937 507 941 460 945 545 949 428 955 423 958 319 962 322 965 435 970 400 973 307 976 307 978 430 982 430 984 378 987 457 991 410 995 383 1000 400 1005 402 1008 445 1011 290 1013 290 1015 519 1021 515 1025 470 1028 402 1032 460 1035 460 1037 388 1040 480 1043 530 1047 610 1051 530 1055 600 1058 366 1060 366 1063 590 1067 572 1072 600 1075 465 1078 540 1082 540 1085 530 1090 525 1093 390 1095 340 1097 345 1100 480 1105 510 1109 500 1113 512 1118 497 1121 443 1124 520 1128 510 1131 450 1134 415 1137 345 1140 370 1143 372 1146 460 1150 415 1154 500 1158 430 1163 495 1168 425 1175 430 1179 348 1184 375 1188 362 1192 455 1197 465 1204 430 1212 433 1217 510 1224 505 1228 485 1230 382 1233 485 1237 580 1242 570 1247 590 1253 577 1258 590 1264 630 1270 638 1275 630 1280 596 1285 632 1290 625 1297 600 1300 405 1302 405 1304 465 1309 500 1314 500 1317 540 1321 470 1326 452 1329 520 1335 567 1341 560 1345 415 1348 420 1351 520 1355 427 1357 427 1360 560 1364 490 1369 485 1373 580 1377 520 1380 497 1384 560 1388 570 1395 565 1398 590 1401 527 1405 545 1410 533 1415 550 1422 560 1427 537 1431 580 1436 640 1440 560 1444 540 1447 580 1451 570 1456 600 1461 625 1464 553 1467 645 1472 638 1477 690 1481 663 1484 695 1487 698V720z"/>
          <path class="g" d="M473 720V716L480 715 484 702 488 694 508 694 512 700 525 700 530 695 570 696 578 688 582 670 585 636 588 636 591 675 594 682 597 670 599 620 602 670 606 696 624 692 628 714 650 709 667 714 674 706 684 708 687 682 690 696 711 695 714 684 720 686 725 674 732 686 737 640 740 684 748 684 753 694 767 694 771 612 774 500 778 362 781 280 783 320 786 468 790 466 791 424 794 500 799 462 803 468 806 322 810 322 812 350 815 270 820 316 823 448 828 440 833 470 838 496 842 535 846 545 849 517 854 530 858 565 862 618 866 610 870 584 875 598 880 570 885 550 892 548 896 516 902 516 905 530 908 456 914 448 917 532 921 470 925 466 929 462 932 530 937 524 942 552 946 520 951 492 955 490 958 386 962 410 966 472 971 410 974 424 979 484 983 452 988 500 993 438 998 460 1004 466 1009 488 1012 452 1016 546 1021 544 1026 478 1029 458 1034 486 1038 474 1042 578 1046 637 1051 570 1055 598 1059 540 1063 605 1070 612 1076 560 1080 562 1085 544 1089 550 1092 440 1096 466 1100 536 1105 545 1110 534 1117 530 1122 484 1126 544 1133 455 1137 466 1143 470 1147 506 1151 480 1156 536 1160 470 1164 524 1171 484 1176 492 1179 428 1184 445 1188 436 1193 500 1200 510 1204 470 1210 468 1215 492 1219 536 1226 524 1230 466 1233 550 1238 592 1245 598 1252 610 1258 634 1266 648 1275 645 1282 638 1290 640 1296 616 1300 508 1305 516 1309 556 1317 578 1321 542 1328 548 1335 590 1341 580 1346 490 1352 548 1356 520 1361 574 1367 530 1372 604 1380 550 1387 600 1394 592 1398 626 1403 580 1410 562 1418 584 1426 570 1432 620 1436 648 1440 610 1445 600 1448 620 1453 605 1457 632 1461 648 1464 600 1468 668 1473 650 1477 690 1482 692 1487 700V720z"/>
          <path class="bl" d="M571 720L573 745 578 749 582 736 588 738 590 757 593 728 669 726 670 748 673 728 679 736 683 727 687 738 690 726 717 728 721 754 725 762 729 748 733 753 737 742 741 758 745 740 755 736 762 740 766 758 770 772 774 855 777 802 779 802 781 853 785 786 791 825 796 814 803 786 810 822 816 831 824 804 828 775 834 784 838 762 845 748 850 762 858 764 864 774 872 770 875 793 882 784 887 800 892 767 897 780 905 797 912 804 921 800 925 820 932 810 938 826 945 838 955 840 960 836 967 862 974 893 982 895 990 903 995 876 1004 858 1010 808 1017 814 1025 838 1034 822 1045 818 1052 818 1060 808 1070 798 1080 788 1090 774 1096 800 1102 826 1110 804 1116 806 1122 840 1130 826 1138 826 1144 816 1147 869 1151 832 1159 893 1167 855 1171 893 1175 868 1180 898 1186 898 1190 875 1198 846 1206 852 1212 840 1219 806 1230 835 1238 792 1247 814 1255 784 1266 798 1275 782 1285 793 1296 788 1306 794 1312 866 1320 806 1330 862 1335 882 1340 855 1346 867 1353 845 1360 873 1366 854 1373 881 1380 870 1388 876 1394 886 1402 882 1408 836 1416 845 1425 815 1430 760 1436 775 1443 755 1449 790 1455 812 1463 792 1472 800 1480 795 1487 774V720z"/>
          <path class="b" d="M322 719H409V721.500H322zM473 720H571L575 728 590 732 594 724 717 724 725 748 735 745 742 742 752 734 762 736 770 764 775 815 779 790 784 815 788 782 793 810 798 800 803 780 812 808 820 800 828 772 836 768 845 746 850 758 860 756 868 766 878 778 890 774 894 768 903 790 914 788 922 786 930 804 938 812 948 828 958 824 966 848 974 878 984 902 990 896 996 868 1004 840 1012 802 1020 812 1026 828 1036 816 1046 814 1056 812 1066 796 1078 784 1090 772 1096 790 1102 816 1112 800 1118 806 1124 826 1134 818 1142 812 1148 850 1154 840 1160 884 1167 842 1174 870 1184 872 1190 850 1198 836 1208 838 1218 802 1230 822 1238 790 1248 804 1256 776 1266 784 1276 778 1290 782 1304 786 1311 826 1316 838 1322 804 1330 845 1336 860 1342 845 1348 854 1354 842 1362 858 1368 846 1376 866 1388 860 1396 870 1403 856 1409 820 1418 834 1426 800 1430 758 1436 762 1441 752 1449 775 1456 800 1466 784 1474 795 1481 780 1487 774V720z"/>
          <path d="M86 448H1490" stroke="#a00000" stroke-width="3"/>
          <path d="M494.700 510H1487" stroke="#f4a0a0" stroke-width="420" stroke-dasharray="1 49.150" opacity=".25"/>
          <path d="M86 910V104M80 903H1496" fill="none" stroke="#667" stroke-width="1.500"/>
          <path d="M86 98L82 112H90zM1500 902L1494 895V909z" fill="#555"/>
        </g>
        <g class="t10 end"><text x="45" y="19">2.2 G</text><text x="45" y="40">2.0 G</text><text x="45" y="60">1.8 G</text><text x="45" y="81">1.6 G</text><text x="45" y="101">1.4 G</text><text x="45" y="121">1.2 G</text><text x="45" y="142">1.0 G</text><text x="45" y="162">0.8 G</text><text x="45" y="183">0.6 G</text><text x="45" y="203">0.4 G</text><text x="45" y="224">0.2 G</text><text x="33" y="244">0.0</text><text x="45" y="265">-0.2 G</text><text x="45" y="285">-0.4 G</text><text x="45" y="305">-0.6 G</text></g>
        <g class="t10 mid"><text x="58" y="322">Sat 12:00</text><text x="135" y="322">Sun 00:00</text><text x="212" y="322">Sun 12:00</text><text x="288" y="322">Mon 00:00</text><text x="365" y="322">Mon 12:00</text><text x="442" y="322">Tue 00:00</text><text x="519" y="322">Tue 12:00</text><text x="595" y="322">Wed 00:00</text><text x="672" y="322">Wed 12:00</text><text x="749" y="322">Thu 00:00</text><text x="826" y="322">Thu 12:00</text><text x="902" y="322">Fri 00:00</text><text x="979" y="322">Fri 12:00</text><text x="1056" y="322">Sat 00:00</text></g>
        <path d="M15.500 345.500h8v9h-8z" fill="#8fb03a" stroke="#333"/><path d="M15.500 359.500h8v9h-8z" fill="#8080c0" stroke="#333"/>
        <g class="t12"><text x="16" y="340">bps</text><text x="79" y="340">Now</text><text x="149" y="340">Ave</text><text x="212" y="340">Max</text><text x="275" y="340">95th %</text><text x="30" y="354">In</text><text x="30" y="368">Out</text><text x="16" y="382">Total</text><text x="66" y="382">42.15T</text><text x="123" y="382">(In</text><text x="158" y="382">28.82T</text><text x="216" y="382">Out</text><text x="250" y="382">13.33T)</text></g>
        <g class="t12 end"><text x="116" y="354">79.36M</text><text x="181" y="354">485.24M</text><text x="246" y="354">2.25G</text><text x="312" y="354">1.02G</text><text x="116" y="368">197.08M</text><text x="181" y="368">224.33M</text><text x="246" y="368">683.35M</text><text x="312" y="368">524.75M</text></g>
        <text class="wm" transform="translate(1145 1) rotate(90)">RRDTOOL / TOBI OETIKER</text>
      </svg>
      <footer class="foot">Powered by <a href="#">LibreNMS 2014.master</a>.<br>LibreNMS is <a href="#">Free Software</a>, released under the <a href="#">GNU GPLv3</a>.<br>Copyright © 2013-2014 by the LibreNMS Contributors.<br>Copyright © 2006-2012 by Adam Armstrong.</footer>
    </div>
  </main>
</section>

<div class="balloon" role="status">
  <svg class="tip" viewBox="0 0 20 16"><path d="M2 16L17 1V16z" fill="#dcdcdc"/></svg>
  <svg class="db"><use href="#dropbox"/></svg>
  <div><h2>Screenshot Added</h2><p>A screenshot was added to your personal Dropbox.</p></div>
  <svg class="cfg"><use href="#wrench"/></svg><svg class="cx"><use href="#x"/></svg>
</div>
</div>
</body>
</html>
```
FILE: styles.css
```css
* { box-sizing: border-box; }
body { margin: 0; overflow: hidden; font: 13px/20px "DejaVu Sans", sans-serif; color: #555; background: #fff; }
a { color: #428bca; text-decoration: none; }
p, h2 { margin: 0; }
button { font: inherit; }
.defs { position: absolute; }
.desktop { display: grid; grid-template-columns: minmax(0, 1817fr) 103px minmax(0, 1920fr); height: 100vh; position: relative; }
.browser { display: flex; flex-direction: column; min-height: 0; overflow: hidden; background: #fff; }

/* tab strip */
.tabs { display: flex; align-items: flex-end; height: 25px; padding-left: 3px; border-bottom: 1px solid #8f9aa8; flex: none; position: relative; }
.tabs-dark { background: linear-gradient(#4b5866, #7b8ca0 40%, #8d9cb0); }
.tabs-light { background: linear-gradient(90deg, #c4f4ff, #d9fbff 30%, #b4f6ff 50%, #cdfcff 80%, #d4ecfb); }
.tab { display: flex; align-items: center; gap: 4px; width: 122px; margin-right: -4px; height: 23px; padding: 0 10px 0 13px; background: #c3cddb; clip-path: polygon(0 100%, 8px 0, 114px 0, 100% 100%); font: 12px/22px "Open Sans", sans-serif; color: #444; }
.tab svg { width: 16px; height: 16px; flex: none; }
.tab span { flex: 1; overflow: hidden; white-space: nowrap; mask-image: linear-gradient(90deg, #000 70%, #0004); }
.tab.plain span, .tab.wide span { mask-image: none; }
.tab svg.x { width: 8px; height: 8px; }
.tb { color: #2c7fb5; }
.tr { color: #b5524a; }
.tab.active { background: #fafafa; color: #111; height: 24px; }
.tab.wide { width: 206px; padding-right: 16px; clip-path: polygon(0 100%, 8px 0, 196px 0, 100% 100%); }
.newtab { width: 30px; height: 14px; margin: 0 0 4px 8px; border: 1px solid #8f9aa8; background: #c3cddb; transform: skewX(20deg); border-radius: 3px; padding: 0; }
.light .newtab { background: #d5dde2; margin-left: 6px; }
.winctl { display: flex; position: absolute; top: 0; right: 4px; height: 18px; border: 1px solid #2a333d; border-top: 0; border-radius: 0 0 5px 5px; overflow: hidden; }
.winctl button { width: 28px; border: 0; border-right: 1px solid #39434f; padding: 0; background: linear-gradient(#b8c2cc, #7c8894 50%, #56626f 51%, #8392a2); display: grid; place-items: center; }
.winctl button.close { width: 46px; border: 0; background: linear-gradient(#dc9a8e, #c4523e 50%, #a8200c 51%, #cc4a30); }
.winctl svg { width: 14px; height: 11px; }
.winctl.pale { border-color: #7a98a8; }
.winctl.pale button { background: #c8e6f2; border-color: #7a98a8; }
.winctl.pale button.close { background: linear-gradient(#c2b4cc, #d0a8b4); }

/* toolbar */
.toolbar { display: flex; align-items: center; height: 36px; flex: none; padding: 0 8px; gap: 13px; background: linear-gradient(#f8f8f8, #e4e4e4); border-bottom: 1px solid #9c9c9c; color: #555; }
.ti { width: 16px; height: 16px; flex: none; }
.dim { color: #bbb; }
.url { flex: 1; display: flex; align-items: center; gap: 5px; height: 27px; margin-right: -1px; padding: 0 3px; background: #fff; border: 1px solid #b0b0b0; border-radius: 2px; font: 15px/24px "Open Sans", sans-serif; color: #808080; }
.url svg { width: 17px; height: 17px; }
.url b { font-weight: 400; color: #000; }
.addr { flex: 1; white-space: nowrap; }
.url .star { width: 18px; height: 18px; }
.ext { width: 20px; height: 20px; flex: none; }
.mn { width: 14px; height: 14px; flex: none; }

/* page */
.view { flex: 1; display: flex; min-height: 0; }
.doc { flex: 1; min-width: 0; display: flex; flex-direction: column; position: relative; }
.navbar { display: flex; align-items: center; flex: none; height: 51px; padding: 2px 0 0 15px; background: #f8f8f8; border-bottom: 1px solid #e7e7e7; }
.navbar a { display: flex; align-items: center; color: #777; padding-right: 32px; }
.navbar a svg { width: 16px; height: 16px; margin-right: 4px; }
.navbar .brand { font-size: 18px; padding-right: 31px; }
.navbar i { border: 4px solid transparent; border-top-color: #777; border-bottom: 0; margin-left: 2px; }
.navbar input { width: 250px; height: 34px; margin: 2px 0 0 -16px; padding: 6px 12px; border: 1px solid #ccc; border-radius: 4px; font: 14px/20px "DejaVu Sans", sans-serif; background: #fff; }
.navbar input::placeholder { color: #999; }
.scrolled { flex: 1; overflow: hidden; padding: 0 15px; min-height: 0; }
.ports { width: 100%; margin-top: -4px; table-layout: fixed; border-collapse: collapse; }
.c-name { width: 469px; }
.c-graph { width: 135px; }
.c-rate { width: 159px; }
.c-speed { width: 100px; }
.c-type { width: 201px; }
.c-mac { width: 204px; }
.ports tr { height: 63px; }
.ports tr:first-child { height: 42px; }
.ports tr:nth-child(odd) { background: #eee; }
.ports td { padding: 0; vertical-align: top; font-size: 12px; line-height: 21px; font-style: italic; }
.ports td:nth-child(1) { font-size: 11px; font-style: normal; }
.ports td:nth-child(1) > * { display: block; }
.ports .name { font-size: 16px; font-weight: 700; color: #1410a0; }
.down .name { color: #999; }
.ports td:nth-child(3) { font-size: 13px; font-style: normal; }
.ports td p { display: flex; align-items: center; gap: 5px; height: 20px; }
.ports td p svg { width: 15px; height: 10px; }
.ports .down .name { color: #999; }
.bi svg { color: #72c86c; }
.bo svg { color: #5c86c4; }
.pi svg { color: #4030b0; }
.po svg { color: #e8845a; }
.ports td.nb { font-size: 11px; font-weight: 700; font-style: normal; }
.nb svg { width: 11px; height: 10px; margin-right: 6px; vertical-align: -2px; }
.nb a { color: #1410a0; }
.nb em { font-style: normal; color: #159a15; }
.spark { display: block; width: 100px; height: 42px; }
.g { fill: #8fb03a; }
.gl { fill: #aeec7c; }
.b { fill: #8080bc; }
.bl { fill: #a0b4f8; }
.r { stroke: #a00000; vector-effect: non-scaling-stroke; fill: none; }
.p { fill: #a860a8; stroke: #3c0c40; vector-effect: non-scaling-stroke; }
.o { fill: #ffdb88; stroke: #ff7a10; vector-effect: non-scaling-stroke; }
.a { stroke: #999; vector-effect: non-scaling-stroke; }
.status { position: absolute; left: 0; bottom: 0; width: 604px; height: 21px; padding-left: 3px; background: #dfdfdf; border-radius: 0 4px 0 0; font: 11px/21px "Open Sans", sans-serif; color: #777; }
.scrollbar { width: 17px; margin-right: 1px; background: #f1f1f1; display: flex; flex-direction: column; align-items: center; padding: 7px 0; }
.up { border: 4px solid transparent; border-bottom-color: #555; border-top: 0; }
.thumb { width: 13px; height: 195px; margin-top: 120px; background: #bcbcbc; border: 1px solid #a8a8a8; }
.dn { margin-top: auto; border: 4px solid transparent; border-top-color: #555; border-bottom: 0; }
.shelf { flex: none; height: 43px; display: flex; align-items: center; justify-content: space-between; padding: 0 44px 4px 4px; background: #dedede; border-top: 1px solid #bbb; font: 11px/18px "Open Sans", sans-serif; }
.dl { display: flex; align-items: center; gap: 12px; height: 35px; width: 205px; padding: 0 4px 0 9px; border: 1px solid #999; border-radius: 3px; background: linear-gradient(#f4f4f4, #e4e4e4); color: #000; white-space: nowrap; }
.dl svg { width: 16px; height: 16px; flex: none; }
.dl span { flex: 1; }
.dl i { border: 4px solid transparent; border-top-color: #666; border-bottom: 0; }
.all { text-decoration: underline; color: #666; }

/* taskbar */
.taskbar { display: flex; flex-direction: column; gap: 4px; padding: 9px 1px 0 1px; background: #05090c; border-left: 1px solid #3e5060; color: #fff; font: 12px/16px "Open Sans", sans-serif; min-height: 0; }
.start { width: 38px; height: 38px; margin: 0 auto 12px 31px; flex: none; }
.taskbar button { display: flex; align-items: center; gap: 5px; width: 100%; height: 28px; flex: none; padding: 0 0 0 7px; border: 1px solid #848a8e; border-radius: 2px; background: linear-gradient(165deg, #85888b, #3a4043 42%, #171c1f 50%, #22282b); color: #fff; white-space: nowrap; overflow: hidden; }
.taskbar button svg, .pin svg { width: 16px; height: 16px; flex: none; }
.taskbar .grp { display: flex; flex-direction: column; flex: none; }
.taskbar .grp button { height: 29px; border-bottom-width: 0; }
.taskbar .grp button:last-child { height: 30px; border-bottom-width: 1px; }
.taskbar button.on { background: linear-gradient(165deg, #b4b6b8, #7c8082 50%, #909496); border-color: #ddd; width: 94px; box-shadow: 3px 0 #3a4043, 4px 0 #ccc; }
.pin { height: 28px; flex: none; display: grid; place-items: center; }
.green { color: #2db55c; }
.blue { color: #4a90d8; }
.grey { color: #aaa; }
.scr { color: #123; }
.scb { color: #1a30c8; }
.tray { margin-top: auto; display: flex; flex-direction: column; }
.more { border: 5px solid transparent; border-right-color: #fff; border-left: 0; width: 5px; margin: 0 0 12px 10px; }
.tris { display: flex; justify-content: space-between; padding: 0 6px 0 7px; }
.tris svg { width: 17px; height: 17px; }
.tray time { text-align: center; line-height: 18px; margin-top: 5px; }
.show { height: 12px; border: 1px solid #777; }

/* graph page */
.content { padding: 9px 15px 0; }
.well { background: #f5f5f5; border: 1px solid #e3e3e3; border-radius: 4px; padding: 19px; box-shadow: inset 0 1px 1px #0001; }
.crumb { display: flex; align-items: center; justify-content: space-between; height: 60px; margin-bottom: 20px; }
.navy { color: #1410a0; }
.sel { position: relative; }
.sel select { appearance: none; display: block; width: 143px; height: 22px; padding: 0 4px; border: 1px solid #bbb; border-radius: 0; background: #fff; box-shadow: inset 0 3px 4px #0002; font: 13px/18px "DejaVu Sans", sans-serif; color: #555; }
.sel::after { content: ""; position: absolute; right: 6px; top: 8px; border: 4px solid transparent; border-top: 6px solid #000; border-bottom: 0; }
.panel { height: 248px; margin-bottom: 26px; }
.ranges { display: grid; grid-template-columns: repeat(9, 1fr); height: 81px; background: #fff; }
.ranges a { display: flex; flex-direction: column; align-items: center; color: #1410a0; font-weight: 700; font-size: 16px; line-height: 20px; }
.ranges svg { width: 112px; height: 61px; }
.panel hr { border: 0; border-top: 1px solid #ccc; margin: 20px 0; height: 0; }
.dates { display: flex; align-items: center; height: 26px; font-weight: 700; }
.dates input { width: 183px; height: 24px; margin: 0 6px; padding: 0 1px; border: 1px solid #bbb; box-shadow: inset 0 3px 4px #0002; font: 13px/20px "DejaVu Sans", sans-serif; color: #555; }
.dates button { height: 24px; padding: 0 1px; border: 1px solid #bbb; background: #fcfcfc; color: #555; font-weight: 400; }
.links { display: flex; justify-content: space-between; }
.rrd { display: block; width: 1160px; height: 390px; }
.gh { stroke: #d4d4d4; stroke-width: 2; stroke-dasharray: 1 2; fill: none; }
.ph { stroke: #f4a8a8; stroke-width: 2; stroke-dasharray: 1 1; fill: none; }
.t10 { font: 10px "DejaVu Sans Mono", monospace; fill: #000; }
.t12 { font: 12px "DejaVu Sans Mono", monospace; fill: #000; }
.end { text-anchor: end; }
.mid { text-anchor: middle; }
.wm { font: 8px "DejaVu Sans Mono", monospace; fill: #aaa; }
.foot { text-align: center; margin-top: 62px; }

/* notification */
.balloon { position: absolute; left: 1607px; top: 1138px; width: 310px; height: 55px; display: flex; gap: 6px; padding: 9px 8px 0 11px; border: 1px solid #111; border-radius: 7px; background: linear-gradient(#fffffff0, #e6e6f2e6); box-shadow: 3px 3px 3px #0005; font: 11px/17px "Open Sans", sans-serif; color: #222; white-space: nowrap; }
.balloon h2 { font: 15px/21px "Open Sans", sans-serif; color: #1f4fa8; }
.db { width: 16px; height: 18px; flex: none; }
.tip { position: absolute; width: 20px; height: 16px; right: 12px; top: -16px; }
.cfg { position: absolute; width: 11px; height: 11px; right: 30px; top: 11px; filter: grayscale(1); }
.cx { position: absolute; width: 9px; height: 9px; right: 13px; top: 12px; }
```
